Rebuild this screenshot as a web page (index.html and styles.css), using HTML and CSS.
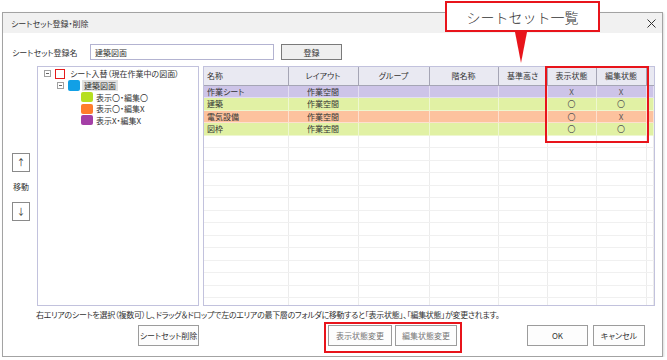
FILE: index.html
```html
<!DOCTYPE html>
<html lang="ja">

<head>
    <meta charset="UTF-8">
    <title>シートセット登録・削除</title>
    <link rel="stylesheet" href="styles.css">
</head>

<body>
    <div class="dialog">
        <div class="titlebar">
            <span class="title">シートセット登録・削除</span>
            <svg class="close" width="9" height="9" viewBox="0 0 9 9">
                <path d="M0.5 0.5 L8.5 8.5 M8.5 0.5 L0.5 8.5" stroke="#333" stroke-width="1" fill="none" />
            </svg>
        </div>
        <div class="content">
            <div class="name-row">
                <span class="name-label">シートセット登録名</span>
                <div class="name-input">建築図面</div>
                <button class="btn btn-register">登録</button>
            </div>

            <div class="main">
                <div class="mover">
                    <button class="btn btn-arrow">↑</button>
                    <span class="mover-label">移動</span>
                    <button class="btn btn-arrow">↓</button>
                </div>

                <div class="tree">
                    <div class="tree-row level-0">
                        <span class="toggle"></span>
                        <span class="check"></span>
                        <span class="tree-text">シート入替（現在作業中の図面）</span>
                    </div>
                    <div class="tree-row level-1">
                        <span class="toggle"></span>
                        <span class="swatch swatch-blue"></span>
                        <span class="tree-text selected">建築図面</span>
                    </div>
                    <div class="tree-row level-2">
                        <span class="swatch swatch-green"></span>
                        <span class="tree-text">表示〇・編集〇</span>
                    </div>
                    <div class="tree-row level-2">
                        <span class="swatch swatch-orange"></span>
                        <span class="tree-text">表示〇・編集X</span>
                    </div>
                    <div class="tree-row level-2">
                        <span class="swatch swatch-purple"></span>
                        <span class="tree-text">表示X・編集X</span>
                    </div>
                </div>

                <div class="sheet-list">
                    <table class="sheet-table">
                        <colgroup>
                            <col style="width: 84px">
                            <col style="width: 70px">
                            <col style="width: 71px">
                            <col style="width: 69px">
                            <col style="width: 49px">
                            <col style="width: 49px">
                            <col style="width: 50px">
                            <col>
                        </colgroup>
                        <thead>
                            <tr>
                                <th class="left">名称</th>
                                <th>レイアウト</th>
                                <th>グループ</th>
                                <th>階名称</th>
                                <th>基準高さ</th>
                                <th>表示状態</th>
                                <th>編集状態</th>
                                <th class="filler"></th>
                            </tr>
                        </thead>
                        <tbody>
                            <tr class="row-purple">
                                <td class="left">作業シート</td><td>作業空間</td><td></td><td></td><td></td>
                                <td class="mark-cell">X</td><td class="mark-cell">X</td><td></td>
                            </tr>
                            <tr class="row-green">
                                <td class="left">建築</td><td>作業空間</td><td></td><td></td><td></td>
                                <td class="mark-cell">〇</td><td class="mark-cell">〇</td><td></td>
                            </tr>
                            <tr class="row-orange">
                                <td class="left">電気設備</td><td>作業空間</td><td></td><td></td><td></td>
                                <td class="mark-cell">〇</td><td class="mark-cell">X</td><td></td>
                            </tr>
                            <tr class="row-green">
                                <td class="left">図枠</td><td>作業空間</td><td></td><td></td><td></td>
                                <td class="mark-cell">〇</td><td class="mark-cell">〇</td><td></td>
                            </tr>
                            <tr><td></td><td></td><td></td><td></td><td></td><td></td><td></td><td></td></tr>
                            <tr><td></td><td></td><td></td><td></td><td></td><td></td><td></td><td></td></tr>
                            <tr><td></td><td></td><td></td><td></td><td></td><td></td><td></td><td></td></tr>
                            <tr><td></td><td></td><td></td><td></td><td></td><td></td><td></td><td></td></tr>
                            <tr><td></td><td></td><td></td><td></td><td></td><td></td><td></td><td></td></tr>
                            <tr><td></td><td></td><td></td><td></td><td></td><td></td><td></td><td></td></tr>
                            <tr><td></td><td></td><td></td><td></td><td></td><td></td><td></td><td></td></tr>
                            <tr><td></td><td></td><td></td><td></td><td></td><td></td><td></td><td></td></tr>
                            <tr><td></td><td></td><td></td><td></td><td></td><td></td><td></td><td></td></tr>
                            <tr><td></td><td></td><td></td><td></td><td></td><td></td><td></td><td></td></tr>
                            <tr><td></td><td></td><td></td><td></td><td></td><td></td><td></td><td></td></tr>
                            <tr><td></td><td></td><td></td><td></td><td></td><td></td><td></td><td></td></tr>
                            <tr><td></td><td></td><td></td><td></td><td></td><td></td><td></td><td></td></tr>
                            <tr><td></td><td></td><td></td><td></td><td></td><td></td><td></td><td></td></tr>
                        </tbody>
                    </table>
                </div>
            </div>

            <p class="hint">右エリアのシートを選択（複数可）し、ドラッグ＆ドロップで左のエリアの最下層のフォルダに移動すると「表示状態」、「編集状態」が変更されます。</p>

            <div class="actions">
                <button class="btn btn-delete">シートセット削除</button>
                <button class="btn btn-show muted">表示状態変更</button>
                <button class="btn btn-edit muted">編集状態変更</button>
                <button class="btn btn-ok">OK</button>
                <button class="btn btn-cancel">キャンセル</button>
            </div>
        </div>
    </div>

    <!-- annotations -->
    <div class="callout">シートセット一覧</div>
    <div class="callout-tail"></div>
    <div class="highlight highlight-status"></div>
    <div class="highlight highlight-buttons"></div>
</body>

</html>
```

FILE: styles.css
```css
* {
    box-sizing: border-box;
}

body {
    margin: 0;
    background-color: white;
    font-family: "Noto Sans CJK JP", "Noto Sans", sans-serif;
    font-size: 8px;
    font-weight: 400;
    line-height: 11px;
    color: #333;
    font-feature-settings: "palt";
}

p {
    margin: 0;
}

.dialog {
    margin: 12px 0 0 2px;
    width: 661px;
    height: 345px;
    border: 1px solid #a3a3a3;
    background-color: white;
    display: flex;
    flex-direction: column;
    box-shadow: 1px 1px 2px rgba(0, 0, 0, 0.15);
}

.titlebar {
    height: 20px;
    background-color: #f1f1f1;
    display: flex;
    align-items: center;
    justify-content: space-between;
    padding: 0 6px 0 8px;
}

.close {
    display: block;
}

.content {
    flex: 1;
    padding: 11px 0 0 9px;
}

.btn {
    font-family: inherit;
    font-size: 8px;
    font-weight: 400;
    line-height: 11px;
    color: #333;
    background-color: #fdfdfd;
    border: 1px solid #9c9c9c;
    padding: 0;
    margin: 0;
    display: flex;
    align-items: center;
    justify-content: center;
    white-space: nowrap;
    font-feature-settings: "palt";
}

.btn.muted {
    color: #777;
}

/* name row */
.name-row {
    display: flex;
    align-items: center;
    height: 16px;
}

.name-label {
    width: 78px;
}

.name-input {
    width: 184px;
    height: 16px;
    border: 1px solid #b3b3d1;
    padding-left: 4px;
    display: flex;
    align-items: center;
}

.btn-register {
    margin-left: 7px;
    width: 61px;
    height: 16px;
    background-color: #efefef;
    border-color: #7a7a7a;
}

/* main area */
.main {
    display: flex;
    margin-top: 6px;
    height: 240px;
}

.mover {
    width: 18px;
    margin-right: 7px;
    display: flex;
    flex-direction: column;
    align-items: center;
    justify-content: center;
    padding-top: 2px;
}

.btn-arrow {
    width: 18px;
    height: 19px;
    border-color: #8a8a8a;
    background-color: white;
    font-size: 9px;
}

.mover-label {
    margin: 9px 0 10px;
}

.tree {
    width: 162px;
    height: 100%;
    border: 1px solid #c2c2dd;
    padding-top: 1px;
}

.tree-row {
    display: flex;
    align-items: center;
    height: 11px;
    margin-bottom: 0.6px;
}

.tree-row.level-0 {
    padding-left: 6px;
}

.tree-row.level-1 {
    padding-left: 19px;
    margin-top: 1px;
}

.tree-row.level-2 {
    padding-left: 43px;
}

.toggle {
    width: 7px;
    height: 7px;
    border: 1px solid #a0a0a0;
    position: relative;
    margin-right: 4px;
}

.toggle::after {
    content: "";
    position: absolute;
    left: 1px;
    right: 1px;
    top: 2px;
    height: 1px;
    background-color: #666;
}

.check {
    width: 10px;
    height: 10px;
    border: 1.5px solid #e51b1b;
    margin-right: 4px;
}

.swatch {
    width: 12px;
    height: 11px;
    border-radius: 2px;
    margin-right: 2px;
}

.tree-row.level-2 .swatch {
    height: 10px;
}

.swatch-blue {
    background-color: #11a0e6;
}

.swatch-green {
    background-color: #b6df21;
}

.swatch-orange {
    background-color: #ff7d2b;
}

.swatch-purple {
    background-color: #a43fa6;
}

.tree-text {
    white-space: nowrap;
    padding: 0 1px;
}

.tree-text.selected {
    background-color: #e2e2e2;
    padding: 0 2px;
}

/* sheet list */
.sheet-list {
    margin-left: 4px;
    width: 452px;
    height: 100%;
    border: 1px solid #c2c2dd;
    overflow: hidden;
}

.sheet-table {
    width: 100%;
    border-collapse: collapse;
    table-layout: fixed;
}

.sheet-table th {
    height: 18px;
    font-weight: 400;
    color: #333;
    background-color: #e9e9f2;
    border-right: 1px solid #a5a5b5;
    border-bottom: 1px solid #a5a5b5;
    padding: 0;
    white-space: nowrap;
    overflow: hidden;
}

.sheet-table th.filler {
    border-right: none;
}

.sheet-table td {
    height: 12.5px;
    padding: 0;
    text-align: center;
    border-right: 1px solid #ececec;
    border-bottom: 1px solid #f0f0f0;
    white-space: nowrap;
    overflow: hidden;
    line-height: 11px;
}

.sheet-table .left {
    text-align: left;
    padding-left: 3px;
}

.sheet-table .mark-cell {
    color: #555;
}

.row-purple td {
    background-color: #cdc4e8;
    border-color: #e4dff3;
}

.row-green td {
    background-color: #e1f1a4;
    border-color: #eef7cf;
}

.row-orange td {
    background-color: #fdc29e;
    border-color: #fde0cf;
}

/* bottom */
.hint {
    margin: 3px 0 0 24px;
    line-height: 12px;
    white-space: nowrap;
    letter-spacing: -0.3px;
}

.actions {
    display: flex;
    margin-top: 4px;
    height: 21px;
}

.actions .btn {
    height: 21px;
}

.btn-delete {
    margin-left: 126px;
    width: 61px;
}

.btn-show {
    margin-left: 129px;
    width: 64px;
}

.btn-edit {
    margin-left: 3px;
    width: 62px;
}

.btn-ok {
    margin-left: 70px;
    width: 61px;
}

.btn-cancel {
    margin-left: 5px;
    width: 52px;
}

/* annotations drawn over the dialog */
.callout {
    position: absolute;
    left: 445px;
    top: 1px;
    width: 155px;
    height: 31px;
    border: 2px solid #e8141b;
    background-color: white;
    display: flex;
    align-items: center;
    justify-content: center;
    font-size: 14px;
    font-weight: 300;
    line-height: 16px;
    color: #333;
    font-feature-settings: normal;
}

.callout-tail {
    position: absolute;
    left: 515px;
    top: 32px;
    width: 0;
    height: 0;
    border-left: 6px solid transparent;
    border-right: 6px solid transparent;
    border-top: 31px solid #e8141b;
}

.highlight {
    position: absolute;
    border: 2px solid #e8141b;
}

.highlight-status {
    left: 545px;
    top: 66px;
    width: 104px;
    height: 77px;
}

.highlight-buttons {
    left: 324px;
    top: 322px;
    width: 138px;
    height: 31px;
}
```
